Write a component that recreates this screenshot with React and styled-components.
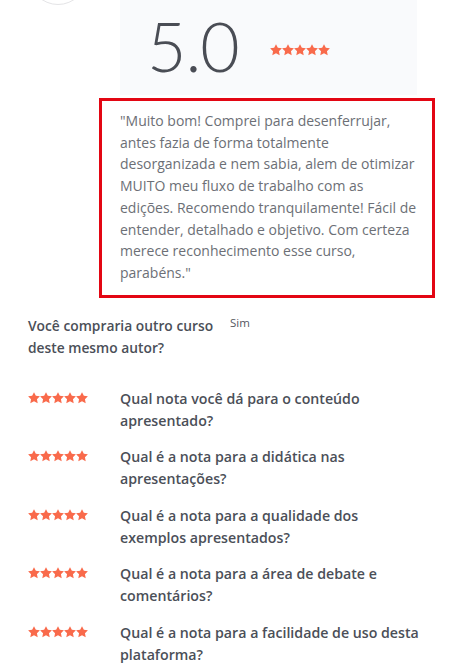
import styled, { createGlobalStyle } from "styled-components";

const Global = createGlobalStyle`
  html, body {
    margin: 0;
    padding: 0;
    background: #ffffff;
    font-family: "Open Sans", "Lato", sans-serif;
  }
`;

const Pagina = styled.div`
  width: 452px;
  height: 672px;
  overflow: hidden;
`;

const Cabecalho = styled.div`
  display: flex;
`;

const ColunaAvatar = styled.div`
  width: 120px;
  flex-shrink: 0;
`;

const Avatar = styled.div`
  width: 56px;
  height: 56px;
  margin: -53px 0 0 29px;
  border-radius: 50%;
  border: 1px solid #e4e4e6;
  background: #ffffff;
`;

const PainelNota = styled.div`
  width: 270px;
  height: 95px;
  padding-left: 27px;
  background: #f9fafc;
  display: flex;
  align-items: center;
  gap: 31px;
`;

const NotaGrande = styled.span`
  font-family: "Lato", sans-serif;
  font-size: 68px;
  font-weight: 300;
  color: #4a4d55;
  line-height: 1;
  letter-spacing: -1px;
  margin-top: -4px;
`;

const Estrelas = styled.div`
  display: flex;
  align-items: center;
  margin-top: ${(props) => props.deslocamento || 0}px;
`;

const CaixaDepoimento = styled.div`
  margin: 3px 0 0 99px;
  width: 336px;
  box-sizing: border-box;
  border: 3px solid #e30613;
  padding: 9px 10px 11px 18px;
`;

const Depoimento = styled.p`
  margin: 0;
  font-size: 14px;
  line-height: 21.7px;
  color: #6c6f76;
  white-space: nowrap;
`;

const Perguntas = styled.div`
  padding: 17px 0 0 28px;
`;

const LinhaAutor = styled.div`
  display: flex;
  align-items: flex-start;
  margin-bottom: 29px;
`;

const TextoPergunta = styled.div`
  width: ${(props) => props.largura}px;
  font-size: ${(props) => props.tamanho}px;
  font-weight: 600;
  line-height: 22px;
  color: #4b4f58;
  white-space: nowrap;
`;

const Resposta = styled.span`
  font-size: 11.5px;
  color: #55585f;
  line-height: 14px;
  margin-top: 1px;
`;

const LinhaAvaliacao = styled.div`
  display: flex;
  align-items: flex-start;
  margin-bottom: 14.5px;
`;

const ColunaEstrelas = styled.div`
  width: 92px;
  padding-top: 4px;
`;

function Estrela({ tamanho }) {
  return (
    <svg width={tamanho} height={tamanho} viewBox="0 0 24 24">
      <path
        fill="#f96a4b"
        d="M12 0.3l3.7 7.3 8.1 1.1-5.9 5.7 1.5 8.1L12 18.7l-7.4 3.8 1.5-8.1L0.2 8.7l8.1-1.1z"
      />
    </svg>
  );
}

function CincoEstrelas({ tamanho, deslocamento }) {
  return (
    <Estrelas deslocamento={deslocamento}>
      {[0, 1, 2, 3, 4].map((i) => (
        <Estrela key={i} tamanho={tamanho} />
      ))}
    </Estrelas>
  );
}

function Linhas({ linhas }) {
  return linhas.map((linha, i) => (
    <span key={i}>
      {linha}
      {i < linhas.length - 1 && <br />}
    </span>
  ));
}

const depoimento = [
  '"Muito bom! Comprei para desenferrujar,',
  "antes fazia de forma totalmente",
  "desorganizada e nem sabia, alem de otimizar",
  "MUITO meu fluxo de trabalho com as",
  "edições. Recomendo tranquilamente! Fácil de",
  "entender, detalhado e objetivo. Com certeza",
  "merece reconhecimento esse curso,",
  'parabéns."',
];

const avaliacoes = [
  ["Qual nota você dá para o conteúdo", "apresentado?"],
  ["Qual é a nota para a didática nas", "apresentações?"],
  ["Qual é a nota para a qualidade dos", "exemplos apresentados?"],
  ["Qual é a nota para a área de debate e", "comentários?"],
  ["Qual é a nota para a facilidade de uso desta", "plataforma?"],
];

function App() {
  return (
    <Pagina>
      <Global />
      <Cabecalho>
        <ColunaAvatar>
          <Avatar />
        </ColunaAvatar>
        <PainelNota>
          <NotaGrande>5.0</NotaGrande>
          <CincoEstrelas tamanho={12} deslocamento={4} />
        </PainelNota>
      </Cabecalho>

      <CaixaDepoimento>
        <Depoimento>
          <Linhas linhas={depoimento} />
        </Depoimento>
      </CaixaDepoimento>

      <Perguntas>
        <LinhaAutor>
          <TextoPergunta largura={202} tamanho={13.8}>
            <Linhas linhas={["Você compraria outro curso", "deste mesmo autor?"]} />
          </TextoPergunta>
          <Resposta>Sim</Resposta>
        </LinhaAutor>

        {avaliacoes.map((pergunta) => (
          <LinhaAvaliacao key={pergunta[0]}>
            <ColunaEstrelas>
              <CincoEstrelas tamanho={12} />
            </ColunaEstrelas>
            <TextoPergunta largura={310} tamanho={14.2}>
              <Linhas linhas={pergunta} />
            </TextoPergunta>
          </LinhaAvaliacao>
        ))}
      </Perguntas>
    </Pagina>
  );
}

export default App;
